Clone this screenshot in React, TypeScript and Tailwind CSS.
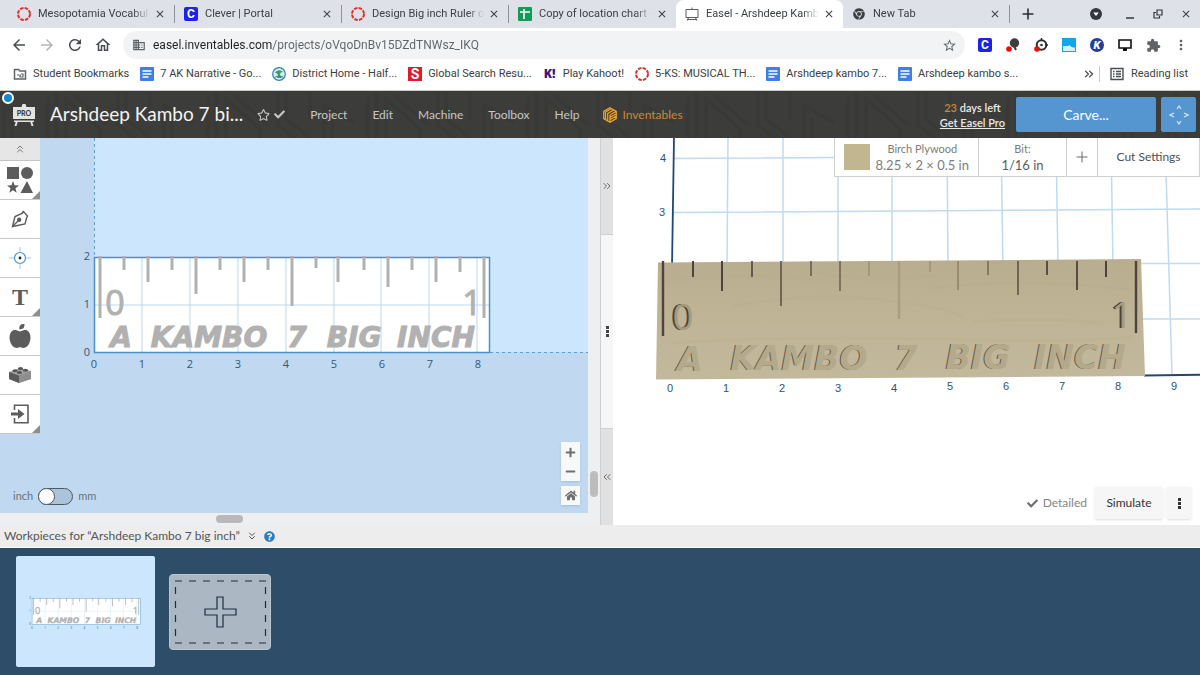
import React from 'react';
import { FaAppleAlt, FaCheck, FaChrome, FaHome, FaMinus, FaPlus, FaQuestionCircle, FaRegStar } from 'react-icons/fa';
import {
  MdArrowBack,
  MdArrowForward,
  MdClose,
  MdDomain,
  MdExtension,
  MdMoreVert,
  MdOutlineHome,
  MdRefresh,
  MdStarBorder,
} from 'react-icons/md';
import { ChevronsDown, ChevronsLeft, ChevronsRight, ChevronsUp } from 'lucide-react';

const CanvasLogo = () => (
  <svg viewBox="0 0 14 14" className="h-[14px] w-[14px] shrink-0">
    <circle cx="7" cy="7" r="6" fill="none" stroke="#d9342b" strokeWidth="2" strokeDasharray="3.5 1.2" />
  </svg>
);

const CleverLogo = () => (
  <span className="flex h-[14px] w-[14px] shrink-0 items-center justify-center rounded-xs bg-[#1d24e0] text-xs leading-none font-bold text-white">
    C
  </span>
);

const SheetsLogo = () => (
  <svg viewBox="0 0 14 14" className="h-[14px] w-[14px] shrink-0">
    <rect width="14" height="14" rx="1" fill="#0f9d58" />
    <path d="M2 5h10M6 2v10" stroke="#fff" strokeWidth="1.6" />
  </svg>
);

const DocsLogo = () => (
  <svg viewBox="0 0 14 14" className="h-[14px] w-[14px] shrink-0">
    <rect width="14" height="14" rx="1" fill="#3f7de8" />
    <path d="M2.5 4h9M2.5 7h9M2.5 10h6" stroke="#fff" strokeWidth="1.5" />
  </svg>
);

const EaselFavicon = () => (
  <svg viewBox="0 0 14 14" className="h-[14px] w-[14px] shrink-0" fill="none" stroke="#5b5b5b">
    <path d="M1 2.5h12v8H1zM7 .5v2M3.5 10.5l-1 3M10.5 10.5l1 3M2 12.5h10" />
  </svg>
);

const FolderIcon = () => (
  <svg viewBox="0 0 14 14" className="h-[14px] w-[14px] shrink-0" fill="none" stroke="#5f6368" strokeWidth="1.5">
    <path d="M1.5 2.5h4l1.5 1.5h5.5v8h-11z" />
    <path d="M4 8h2M8 7h2v3H7V8h1" strokeWidth="1.2" />
  </svg>
);

const DistrictLogo = () => (
  <svg viewBox="0 0 14 14" className="h-[14px] w-[14px] shrink-0">
    <circle cx="7" cy="7" r="6.3" fill="#d9efe6" stroke="#2f7fb8" strokeWidth="1.2" />
    <path d="M3 6c2-4 6-3 8-1-2 0-3 1-3 3l2 3H5l1-3C5 6 4 6 3 6z" fill="#3d9a6b" />
    <path d="M3 10q4-2 8 0" stroke="#2f7fb8" fill="none" />
  </svg>
);

const ScholasticLogo = () => (
  <span className="flex h-[14px] w-[14px] shrink-0 items-center justify-center bg-[#e01b2d] text-sm leading-none font-bold text-white">
    S
  </span>
);

const KahootLogo = () => (
  <span className="flex w-[14px] shrink-0 justify-center font-['Open_Sans',sans-serif] text-xs font-extrabold text-[#3a1682]">K!</span>
);

const ReadingListIcon = () => (
  <svg viewBox="0 0 14 14" className="h-[14px] w-[14px] shrink-0" fill="none" stroke="#4a4d51" strokeWidth="1.4">
    <path d="M1 1.5h12v11H1zM6 4.5h5M6 7h5M6 9.5h5M3 4.5h1.5M3 7h1.5M3 9.5h1.5" />
  </svg>
);

const tabs = [
  { title: 'Mesopotamia Vocabul', icon: <CanvasLogo />, divider: true },
  { title: 'Clever | Portal', icon: <CleverLogo />, divider: true },
  { title: 'Design Big inch Ruler o', icon: <CanvasLogo />, divider: true },
  { title: 'Copy of location chart -', icon: <SheetsLogo /> },
  { title: 'Easel - Arshdeep Kamb', icon: <EaselFavicon />, active: true },
  { title: 'New Tab', icon: <FaChrome className="h-3 w-[14px] shrink-0 text-[#3c4043]" />, divider: true },
];

const bookmarks = [
  { title: 'Student Bookmarks', icon: <FolderIcon /> },
  { title: '7 AK Narrative - Go...', icon: <DocsLogo /> },
  { title: 'District Home - Half...', icon: <DistrictLogo /> },
  { title: 'Global Search Resu...', icon: <ScholasticLogo /> },
  { title: 'Play Kahoot!', icon: <KahootLogo /> },
  { title: '5-KS: MUSICAL TH...', icon: <CanvasLogo /> },
  { title: 'Arshdeep kambo 7...', icon: <DocsLogo /> },
  { title: 'Arshdeep kambo s...', icon: <DocsLogo /> },
];

function TabStrip() {
  return (
    <div className="flex h-7 items-center bg-[#dee1e8] pl-2">
      {tabs.map((tab) => (
        <div
          key={tab.title}
          className={
            tab.active
              ? 'flex h-7 max-w-[167px] flex-1 items-center rounded-t-lg bg-white pr-1 pl-[9px]'
              : 'flex h-7 max-w-[167px] flex-1 items-center pr-1 pl-[9px]'
          }
        >
          {tab.icon}
          <span className="ml-[7px] w-[110px] flex-1 mask-r-from-85% whitespace-nowrap">{tab.title}</span>
          <button aria-label="Close tab" className="flex w-5 shrink-0 justify-center">
            <MdClose className="h-3 w-3" />
          </button>
          {tab.divider && <span className="-mr-1 ml-1 h-[18px] w-px bg-[#8f9298]" />}
        </div>
      ))}
      <button aria-label="New tab" className="ml-2 flex w-5 justify-center">
        <svg viewBox="0 0 12 12" className="h-3 w-3" stroke="#2b2d30" strokeWidth="1.6">
          <path d="M6 .5v11M.5 6h11" />
        </svg>
      </button>
      <div className="ml-auto flex items-center">
        <button aria-label="Search tabs" className="mr-[14px] flex h-3 w-3 items-center justify-center">
          <svg viewBox="0 0 12 12" className="h-3 w-3">
            <circle cx="6" cy="6" r="6" fill="#34373b" />
            <path d="M3.2 4.5h5.6L6 8z" fill="#fff" />
          </svg>
        </button>
        <button aria-label="Minimize" className="flex w-7 justify-center">
          <svg viewBox="0 0 10 10" className="h-[10px] w-[10px]" stroke="#33363a" strokeWidth="1.5">
            <path d="M1 9h8" />
          </svg>
        </button>
        <button aria-label="Restore" className="flex w-7 justify-center">
          <svg viewBox="0 0 10 10" className="h-[10px] w-[10px]" fill="none" stroke="#33363a" strokeWidth="1.2">
            <path d="M4 1h5v5H4zM3 3.5H1V9h5.5V7" />
          </svg>
        </button>
        <button aria-label="Close window" className="flex w-7 justify-center">
          <MdClose className="h-3 w-3" />
        </button>
      </div>
    </div>
  );
}

function Extensions() {
  return (
    <div className="flex items-center pr-[5px] pl-[6px] text-[#5f6368]">
      <button aria-label="Clever" className="flex w-7 justify-center">
        <CleverLogo />
      </button>
      <button aria-label="Screen reader" className="flex w-7 justify-center">
        <svg viewBox="0 0 14 14" className="h-[14px] w-[14px]">
          <circle cx="8.5" cy="5" r="4.7" fill="#3d3d3d" />
          <path d="M8 8l2 4" stroke="#3d3d3d" strokeWidth="2" />
          <circle cx="3" cy="11" r="2.8" fill="#f00b0b" />
        </svg>
      </button>
      <button aria-label="Page tracker" className="flex w-7 justify-center">
        <svg viewBox="0 0 14 14" className="h-[14px] w-[14px]">
          <circle cx="7.5" cy="7" r="4.8" fill="none" stroke="#2f2f2f" strokeWidth="2" />
          <circle cx="7.5" cy="7" r="1.3" fill="#2f2f2f" />
          <path d="M7.5 0v3M14 7h-3" stroke="#2f2f2f" strokeWidth="1.5" />
          <circle cx="3" cy="11" r="2.8" fill="#f00b0b" />
        </svg>
      </button>
      <button aria-label="Screen share" className="flex w-7 justify-center">
        <svg viewBox="0 0 14 14" className="h-[14px] w-[14px]">
          <rect width="14" height="14" fill="#12a5e8" />
          <path d="M1 8h7l5 3v2H1z" fill="#d5effb" />
          <path d="M7 7q1 4 6 3" stroke="#fff" fill="none" />
        </svg>
      </button>
      <button aria-label="Kami" className="flex w-7 justify-center">
        <span className="flex h-[14px] w-[14px] items-center justify-center rounded-full bg-[#25409a] text-[11px] leading-none font-black text-white italic">
          K
        </span>
      </button>
      <button aria-label="Display" className="flex w-7 justify-center">
        <svg viewBox="0 0 14 14" className="h-[14px] w-[14px]">
          <path d="M1 2h12v8H1z" fill="none" stroke="#111" strokeWidth="1.6" />
          <path d="M5 10h4v3H5z" fill="#111" />
        </svg>
      </button>
      <button aria-label="Extensions" className="flex w-7 justify-center">
        <MdExtension className="h-[15px] w-[15px]" />
      </button>
      <button aria-label="Browser menu" className="flex w-7 justify-center">
        <MdMoreVert className="h-4 w-4" />
      </button>
    </div>
  );
}

function AddressBar() {
  return (
    <div className="flex h-[34px] items-center bg-white pl-[5px]">
      <button aria-label="Back" className="flex w-7 justify-center text-[#4a4d51]">
        <MdArrowBack className="h-[18px] w-[18px]" />
      </button>
      <button aria-label="Forward" className="flex w-7 justify-center text-[#b4b6b9]">
        <MdArrowForward className="h-[18px] w-[18px]" />
      </button>
      <button aria-label="Reload" className="flex w-7 justify-center text-[#4a4d51]">
        <MdRefresh className="h-[18px] w-[18px]" />
      </button>
      <button aria-label="Home" className="flex w-7 justify-center text-[#4a4d51]">
        <MdOutlineHome className="h-[18px] w-[18px]" />
      </button>
      <div className="ml-[6px] flex h-7 flex-1 items-center rounded-full bg-[#f1f3f4] pr-2 pl-[9px] text-[#5f6368]">
        <MdDomain className="h-[14px] w-[14px]" />
        <input
          aria-label="Address"
          defaultValue="easel.inventables.com/projects/oVqoDnBv15DZdTNWsz_IKQ"
          className="ml-[7px] flex-1 bg-linear-to-r from-[#202124] from-[119px] to-[#5f6368] to-[119px] bg-clip-text text-xs text-transparent outline-none"
        />
        <button aria-label="Bookmark this page">
          <MdStarBorder className="h-[15px] w-[15px]" />
        </button>
      </div>
      <Extensions />
    </div>
  );
}

function BookmarkBar() {
  return (
    <div className="flex h-[29px] items-center gap-[11px] border-b border-[#c9cacc] bg-white pr-3 pb-1 pl-[13px] whitespace-nowrap">
      {bookmarks.map((bookmark) => (
        <a key={bookmark.title} href="#" className="flex items-center gap-[6px]">
          {bookmark.icon}
          {bookmark.title}
        </a>
      ))}
      <button aria-label="More bookmarks" className="-mr-2 ml-auto">
        <ChevronsRight className="h-[14px] w-[14px]" />
      </button>
      <a href="#" className="flex items-center gap-[7px] border-l border-[#c9cacc] pl-[10px]">
        <ReadingListIcon />
        Reading list
      </a>
    </div>
  );
}

function HeaderTexture() {
  return (
    <svg className="absolute inset-0 h-full w-full">
      <defs>
        <pattern id="texture" width="160" height="56" patternUnits="userSpaceOnUse">
          <path
            d="M4 56V14l30 18M12 56V28M48 6v44M56 2v50M66 56V8l34 30v18M74 4l34 30M118 0v34l24 18M126 0v28l24 18M150 0v30"
            fill="none"
            stroke="#353633"
            strokeWidth="4"
          />
        </pattern>
      </defs>
      <rect width="100%" height="100%" fill="url(#texture)" opacity="0.4" />
    </svg>
  );
}

function EaselHeader() {
  return (
    <header className="relative flex h-[47px] items-center bg-[#3c3d3a] pr-1 pl-3 font-['Lato',sans-serif] text-[#c6c7c5]">
      <HeaderTexture />
      <span className="absolute top-px left-[2px] h-3 w-3 rounded-full border-2 border-white bg-[#1286d8]" />
      <svg viewBox="0 0 24 24" className="relative h-6 w-6 shrink-0" fill="#e4e4e2">
        <path d="M10.500 1h3l1 3h-5zM1 4h22v12H1zM2 17.500h20V19H2zM4 18h2l-1.500 5H2.500zM18 18h2l1.500 5h-2z" />
        <text x="12" y="13" textAnchor="middle" fontSize="7" fontWeight="900" fill="#3d3e3c">
          PRO
        </text>
      </svg>
      <h1 className="relative ml-[14px] text-[19px] whitespace-nowrap text-[#f3f3f2]">Arshdeep Kambo 7 bi...</h1>
      <button aria-label="Favorite" className="relative ml-[14px]">
        <FaRegStar className="h-3 w-[13px]" />
      </button>
      <FaCheck className="relative ml-1 h-[11px] w-[11px] shrink-0" />
      <nav className="relative ml-[25px] flex items-center gap-[25px] text-xs">
        <a href="#">Project</a>
        <a href="#">Edit</a>
        <a href="#">Machine</a>
        <a href="#">Toolbox</a>
        <a href="#">Help</a>
        <a href="#" className="-ml-[2px] flex items-center gap-1 text-[#c98a33]">
          <svg viewBox="0 0 16 16" className="h-4 w-4" fill="none">
            <path d="M8 0l7 4v8l-7 4-7-4V4z" fill="#4a3f28" />
            <path d="M8 .8l6.300 3.600v7.200L8 15.200l-6.300-3.600V4.400zM8 8v7M3.500 5v7M5.700 6v7.500M8 8l6-3.500M8 10.500l6-3.500M8 12.800l6-3.500M3.500 5L9.500 1.800M5.700 6.500l6-3.500" stroke="#f0a52a" strokeWidth="1.200" />
          </svg>
          Inventables
        </a>
      </nav>
      <div className="relative ml-auto flex flex-col items-center text-[11px] leading-[15px] font-semibold text-[#e9e9e8]">
        <span>
          <span className="text-[#c98a33]">23</span> days left
        </span>
        <a href="#" className="underline">
          Get Easel Pro
        </a>
      </div>
      <button className="relative ml-[11px] h-[35px] w-[140px] rounded-xs bg-[#5596d0] text-sm text-white">Carve...</button>
      <button aria-label="Jog machine" className="relative ml-[5px] flex h-[35px] w-[35px] items-center justify-center rounded-xs bg-[#5596d0]">
        <svg viewBox="0 0 20 20" className="h-5 w-5" fill="none" stroke="#d5e6f6" strokeWidth="1.2">
          <path d="M8 4l2-3 2 3M8 16l2 3 2-3M5 8l-4 2 4 2M15 8l4 2-4 2" />
        </svg>
      </button>
    </header>
  );
}

const shapesIcon = (
  <svg viewBox="0 0 26 26" className="h-[26px] w-[26px]" fill="#5c5c5c">
    <path d="M0 0h12v12H0zM20 14l6 12H13.5zM6 14l1.6 4.3 4.4.1-3.5 2.8 1.2 4.5L6 23.2l-3.7 2.5 1.2-4.5L0 18.4l4.4-.1z" />
    <circle cx="20" cy="6" r="6" />
  </svg>
);

const penIcon = (
  <svg viewBox="0 0 18 18" className="h-[18px] w-[18px]" fill="none" stroke="#5c5c5c" strokeWidth="1.4">
    <path d="M1.5 16.5L4 6.5l7-3 1.5-2L16.5 6l-1 2-1.5 6z" />
    <path d="M1.5 16.5L7.5 10.5M11 3.5L12.5 1.5" />
    <circle cx="8.2" cy="9.8" r="1.5" fill="#5c5c5c" />
  </svg>
);

const drillIcon = (
  <svg viewBox="0 0 22 22" className="h-[22px] w-[22px]" fill="none" stroke="#3f8ee0">
    <circle cx="11" cy="11" r="5.5" strokeWidth="1.2" />
    <path d="M11 0v5.5M11 16.5V22M0 11h5.5M16.5 11H22" stroke="#9cc6ee" />
    <circle cx="11" cy="11" r="1.4" fill="#222" stroke="none" />
  </svg>
);

const brickIcon = (
  <svg viewBox="0 0 22 18" className="h-[18px] w-[22px]">
    <path d="M0 6l11-4 11 3v8l-12 4L0 13z" fill="#a3a3a3" />
    <path d="M0 6l10 3.5V17L0 13z" fill="#5a5a5a" />
    <path d="M10 9.5L22 5v8l-12 4z" fill="#8e8e8e" />
    <g fill="#555">
      <ellipse cx="6" cy="4.8" rx="2.6" ry="1.5" />
      <ellipse cx="11.5" cy="2.5" rx="2.6" ry="1.5" />
      <ellipse cx="10.5" cy="6.5" rx="2.6" ry="1.5" />
      <ellipse cx="16.5" cy="4.3" rx="2.6" ry="1.5" />
    </g>
  </svg>
);

const importIcon = (
  <svg viewBox="0 0 18 20" className="h-5 w-[18px]" fill="none" stroke="#5c5c5c" strokeWidth="1.6">
    <path d="M3.5 6V1.2H17v17.6H3.5V14" />
    <path d="M0 8.5h7V5l6.5 5L7 15v-3.500H0z" fill="#5c5c5c" stroke="none" />
  </svg>
);

const tools = [
  { name: 'Shapes', icon: shapesIcon, more: true },
  { name: 'Pen', icon: penIcon },
  { name: 'Drill', icon: drillIcon },
  { name: 'Text', icon: <span className="font-['Liberation_Serif',serif] text-2xl font-bold text-[#5c5c5c]">T</span>, more: true },
  { name: 'Icons', icon: <FaAppleAlt className="h-6 w-[22px] text-[#5c5c5c]" /> },
  { name: 'Apps', icon: brickIcon },
  { name: 'Import', icon: importIcon, more: true },
];

function ToolPalette() {
  return (
    <div className="relative flex w-10 flex-col">
      <button aria-label="Collapse tools" className="flex h-[23px] items-center justify-center border-b border-[#c4c4c4] bg-[#e6e6e6]">
        <ChevronsUp className="h-3 w-3 text-[#777]" />
      </button>
      {tools.map((tool) => (
        <button
          key={tool.name}
          aria-label={tool.name}
          className="relative flex h-[39px] items-center justify-center border-b border-[#c8c8c8] bg-white"
        >
          {tool.icon}
          {tool.more && (
            <svg viewBox="0 0 8 8" className="absolute right-0 bottom-0 h-2 w-2" fill="#8e8e8e">
              <path d="M8 0v8H0z" />
            </svg>
          )}
        </button>
      ))}
    </div>
  );
}

// x position and bottom of every tick on the ruler
const planTicks = [
  [100, 180], [124, 132], [148, 144], [172, 132], [196, 156], [220, 132], [244, 144], [268, 132], [292, 168],
  [316, 130], [338, 144], [364, 132], [388, 149], [412, 132], [436, 144], [460, 134], [484, 180],
];

const planWords = [
  { text: 'A', x: 121 },
  { text: 'KAMBO', x: 209 },
  { text: '7', x: 297 },
  { text: 'BIG', x: 354 },
  { text: 'INCH', x: 436 },
];

function RulerPlan() {
  return (
    <g>
      <rect x="94.5" y="119.5" width="395" height="95" fill="#fff" />
      <path
        d="M142 120v94M190 120v94M238 120v94M286 120v94M334 120v94M381 120v94M429 120v94M477 120v94M95 167h394"
        stroke="#bcd8ee"
      />
      <rect x="94.5" y="119.5" width="395" height="95" fill="none" stroke="#4a90cb" strokeWidth="1.5" />
      {planTicks.map(([x, bottom]) => (
        <path key={x} d={`M${x} 118V${bottom}`} stroke="#b1b1b1" strokeWidth="3" />
      ))}
      <g fill="#b1b1b1" stroke="#b1b1b1" textAnchor="middle">
        <g fontFamily="Open Sans, sans-serif" fontSize="34" fontWeight="500">
          <text x="115" y="177">0</text>
          <text x="472" y="177">1</text>
        </g>
        <g fontFamily="DejaVu Sans, sans-serif" fontSize="28" fontWeight="700" fontStyle="italic">
          {planWords.map((word) => (
            <text key={word.text} x={word.x} y="209">
              {word.text}
            </text>
          ))}
        </g>
      </g>
      <g fontFamily="Open Sans, sans-serif" fontSize="11" fill="#35587a" textAnchor="middle">
        {[0, 1, 2, 3, 4, 5, 6, 7, 8].map((n) => (
          <text key={n} x={94 + n * 48} y="230">
            {n}
          </text>
        ))}
        {[0, 1, 2].map((n) => (
          <text key={n} x="87" y={218 - n * 48}>
            {n}
          </text>
        ))}
      </g>
    </g>
  );
}

function DesignPane() {
  return (
    <section className="flex w-1/2 flex-col bg-[#eeeff0]">
      <div className="flex flex-1">
        <div className="relative flex flex-1 bg-[#c0d9f0]">
          <svg className="absolute inset-0 h-full w-full">
            <rect x="94" width="100%" height="214" fill="#cce6fe" />
            <path d="M94.5 0v119" stroke="#5a9fd0" strokeDasharray="3 3" />
            <line x1="490" y1="214.5" x2="100%" y2="214.5" stroke="#5a9fd0" strokeDasharray="3 3" />
            <RulerPlan />
          </svg>
          <ToolPalette />
          <div className="absolute bottom-2 left-[13px] flex items-center gap-[5px] text-[11px] text-[#66727c]">
            <label htmlFor="unit">inch</label>
            <input
              id="unit"
              type="checkbox"
              aria-label="Use millimetres"
              className="relative h-[17px] w-[35px] appearance-none rounded-full border border-[#4d5963] bg-[#abc4d9] before:absolute before:-top-px before:-left-px before:h-[17px] before:w-[17px] before:rounded-full before:border before:border-[#4d5963] before:bg-white"
            />
            <label htmlFor="unit">mm</label>
          </div>
          <div className="absolute right-2 bottom-2 flex w-[19px] flex-col gap-[5px] text-[#6f6f6f]">
            <div className="flex flex-col bg-[#f7f8f8] shadow-sm">
              <button aria-label="Zoom in" className="flex h-5 items-center justify-center">
                <FaPlus className="h-[11px] w-[11px]" />
              </button>
              <button aria-label="Zoom out" className="flex h-[19px] items-center justify-center">
                <FaMinus className="h-[11px] w-[11px]" />
              </button>
            </div>
            <button aria-label="Reset view" className="flex h-[19px] items-center justify-center bg-[#f7f8f8] shadow-sm">
              <FaHome className="h-[11px] w-3" />
            </button>
          </div>
        </div>
        <div className="flex w-3 flex-col items-center justify-end pb-4">
          <div className="h-[26px] w-2 rounded-sm bg-[#bdbdbd]" />
        </div>
      </div>
      <div className="flex h-3 items-center justify-center pr-[142px]">
        <div className="h-2 w-[27px] rounded-sm bg-[#b9b9b9]" />
      </div>
    </section>
  );
}

function Splitter() {
  return (
    <div className="flex w-[13px] flex-col border-l border-[#cfcfcf] bg-[#e1e1e1] text-[#6b6b6b]">
      <button aria-label="Expand design" className="flex flex-1 items-center justify-center">
        <ChevronsRight className="h-3 w-3" />
      </button>
      <div className="flex flex-2 flex-col items-center justify-center gap-px border-y border-[#cfcfcf] bg-[#f6f6f6]">
        <span className="h-[3px] w-[3px] bg-[#444]" />
        <span className="h-[3px] w-[3px] bg-[#444]" />
        <span className="h-[3px] w-[3px] bg-[#444]" />
      </div>
      <button aria-label="Expand preview" className="flex flex-1 items-center justify-center">
        <ChevronsLeft className="h-3 w-3" />
      </button>
    </div>
  );
}

const carvedTicks = [
  { x: 50, bottom: 198, width: 2.4, color: '#4d443b' },
  { x: 80, bottom: 139, width: 2, color: '#4d443b' },
  { x: 109, bottom: 153, width: 2, color: '#4d443b' },
  { x: 139, bottom: 139, width: 1.6, color: '#4d443b' },
  { x: 168, bottom: 168, width: 1.6, color: '#5d5347' },
  { x: 198, bottom: 138, width: 1.4, color: '#5d5347' },
  { x: 227, bottom: 153, width: 1.3, color: '#5d5347' },
  { x: 256, bottom: 138, width: 1.2, color: '#958a6c' },
  { x: 286, bottom: 181, width: 2.4, color: '#a89d7d' },
  { x: 317, bottom: 134, width: 1.2, color: '#958a6c' },
  { x: 345, bottom: 152, width: 1.3, color: '#857a60' },
  { x: 375, bottom: 137, width: 1.4, color: '#6d6350' },
  { x: 405, bottom: 157, width: 1.6, color: '#5d5347' },
  { x: 434, bottom: 137, width: 1.8, color: '#4d443b' },
  { x: 464, bottom: 152, width: 1.8, color: '#4d443b' },
  { x: 493, bottom: 139, width: 2, color: '#4d443b' },
  { x: 523, bottom: 195, width: 2.4, color: '#4d443b' },
];

const carvedWords = [
  { text: 'A', x: 77, y: 233 },
  { text: 'KAMBO', x: 186, y: 232 },
  { text: '7', x: 293, y: 232 },
  { text: 'BIG', x: 365, y: 231 },
  { text: 'INCH', x: 467, y: 231 },
];

function CarvedWords({ fill }: { fill: string }) {
  return (
    <g fill={fill} textAnchor="middle" fontFamily="DejaVu Sans, sans-serif" fontSize="33" fontWeight="700" fontStyle="italic">
      {carvedWords.map((word) => (
        <text key={word.text} x={word.x} y={word.y}>
          {word.text}
        </text>
      ))}
    </g>
  );
}

function CarvedNumbers({ fill }: { fill: string }) {
  return (
    <g fill={fill} textAnchor="middle" fontFamily="Open Sans, sans-serif" fontSize="37">
      <text x="69" y="192">0</text>
      <text x="508" y="190">1</text>
    </g>
  );
}

function CarvedPreview() {
  return (
    <svg className="absolute inset-0 h-full w-full">
      <defs>
        <linearGradient id="wood" x1="0" y1="0" x2="0" y2="1">
          <stop offset="0" stopColor="#b9ad8f" />
          <stop offset="0.6" stopColor="#c0b598" />
          <stop offset="1" stopColor="#c2b89b" />
        </linearGradient>
      </defs>
      <g stroke="#bfdaf3" strokeWidth="1.5">
        <path d="M115 0l-1 130M170 0v130M225 0v130M279 0v130M334 0l1 130M388 0l2 130M443 0l2 130M498 0l2 130M552 0l7 237" />
        <path d="M60 20.5L600 17M60 74.5L600 71M528 125.5h90M530 181h90" />
      </g>
      <path d="M61 0l-2 130M531 237.5L640 236" stroke="#1f4a72" strokeWidth="1.8" />
      <path d="M45 124.5L528 121l4 117-489 3.5z" fill="url(#wood)" />
      <g fill="none" stroke="#b3a888" opacity="0.2" strokeWidth="3">
        <path d="M48 142q90-8 180 2M120 168q80-14 150-6t80 18M320 150q90-12 200 2M60 205q120-8 260-4t200-2M360 184q80-6 130 2M200 134q60 12 120 4" />
      </g>
      {carvedTicks.map((tick) => (
        <path key={tick.x} d={`M${tick.x} 123V${tick.bottom}`} stroke={tick.color} strokeWidth={tick.width} />
      ))}
      <g transform="translate(-1 0)">
        <CarvedWords fill="#5f5546" />
        <CarvedNumbers fill="#4d443b" />
      </g>
      <CarvedWords fill="#b4aa8b" />
      <g transform="translate(1 0)">
        <CarvedNumbers fill="#a69b7c" />
      </g>
      <g fontFamily="Liberation Sans, sans-serif" fontSize="11" fill="#2f5273" textAnchor="middle">
        {[0, 1, 2, 3, 4, 5, 6, 7, 8, 9].map((n) => (
          <text key={n} x={57 + n * 56} y={n < 5 ? 254 : 252}>
            {n}
          </text>
        ))}
        <text x="50" y="24">4</text>
        <text x="49" y="78">3</text>
      </g>
    </svg>
  );
}

function MaterialBar() {
  return (
    <div className="absolute top-0 right-0 flex h-[39px] divide-x divide-[#cdd1d4] border border-t-0 border-[#cdd1d4] bg-white text-[#7d7d7d]">
      <button className="flex items-center gap-[6px] pr-[9px] pl-[9px]">
        <span className="h-[26px] w-[26px] bg-[#c1b68f]" />
        <span className="flex flex-col items-center">
          <span className="text-[11px] leading-4">Birch Plywood</span>
          <span className="text-[13px] leading-4">8.25 × 2 × 0.5 in</span>
        </span>
      </button>
      <button className="flex w-22 flex-col items-center justify-center">
        <span className="text-[11px] leading-4">Bit:</span>
        <span className="text-[13px] leading-4 text-[#5c5c5c]">1/16 in</span>
      </button>
      <button aria-label="Add bit" className="flex w-[31px] items-center justify-center">
        <svg viewBox="0 0 12 12" className="h-3 w-3" stroke="#666">
          <path d="M6 .5v11M.5 6h11" />
        </svg>
      </button>
      <button className="w-[101px] text-xs text-[#4f4f4f]">Cut Settings</button>
    </div>
  );
}

function PreviewPane() {
  return (
    <section className="relative min-w-0 flex-1 overflow-hidden bg-white">
      <CarvedPreview />
      <MaterialBar />
      <div className="absolute right-[9px] bottom-[6px] flex items-center gap-1">
        <label className="mr-1 flex items-center gap-[5px] text-xs text-[#858585]">
          <input type="checkbox" defaultChecked className="sr-only" />
          <FaCheck className="h-[11px] w-[11px] text-[#6f6f6f]" />
          Detailed
        </label>
        <button className="h-8 w-[68px] bg-[#f6f6f6] text-xs text-[#333] shadow-sm">Simulate</button>
        <button aria-label="Preview options" className="flex h-8 w-6 flex-col items-center justify-center gap-px bg-[#f6f6f6] shadow-sm">
          <span className="h-[3px] w-[3px] bg-[#333]" />
          <span className="h-[3px] w-[3px] bg-[#333]" />
          <span className="h-[3px] w-[3px] bg-[#333]" />
        </button>
      </div>
    </section>
  );
}

function Workpieces() {
  return (
    <footer>
      <div className="flex h-[23px] items-center border-b border-white bg-[#ededed] pl-1 text-xs text-[#555]">
        Workpieces for “Arshdeep Kambo 7 big inch”
        <button aria-label="Toggle workpieces" className="ml-[6px]">
          <ChevronsDown className="h-3 w-3" />
        </button>
        <button aria-label="Help" className="ml-[6px]">
          <FaQuestionCircle className="h-[11px] w-[11px] text-[#2e7cc0]" />
        </button>
      </div>
      <div className="flex items-center gap-[14px] bg-[#2e4d68] px-4 py-2">
        <button aria-label="Workpiece 1" className="flex h-[111px] w-[139px] items-center justify-center rounded-xs bg-[#cce6fe]">
          <svg viewBox="76 111 431 111" className="w-[118px] overflow-visible">
            <RulerPlan />
          </svg>
        </button>
        <button aria-label="Add workpiece" className="rounded-sm border border-[#bac5ce] bg-[#abb8c4]">
          <svg viewBox="0 0 100 74" className="h-[74px] w-[100px]" fill="none" stroke="#1c2e3e" strokeWidth="1.2">
            <path d="M5 6h91M5 68h91" strokeDasharray="7 7" />
            <path d="M5.5 12v50M95.5 12v50" strokeDasharray="7 7" />
            <path d="M47 22h6v12h13v6H53v12h-6V40H35v-6h12z" />
          </svg>
        </button>
      </div>
    </footer>
  );
}

export default function App() {
  return (
    <div className="flex min-h-screen flex-col bg-[#2e4d68] font-['Lato',sans-serif]">
      <div className="font-['Roboto',sans-serif] text-[11px] text-[#3c4043]">
        <TabStrip />
        <AddressBar />
        <BookmarkBar />
      </div>
      <EaselHeader />
      <main className="flex min-h-[360px] flex-1">
        <DesignPane />
        <Splitter />
        <PreviewPane />
      </main>
      <Workpieces />
    </div>
  );
}
